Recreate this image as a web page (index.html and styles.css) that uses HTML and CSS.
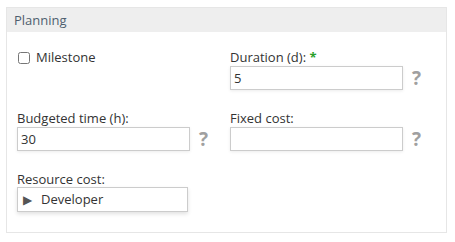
FILE: index.html
```html
<!DOCTYPE html>
<html lang="en">
<head>
<meta charset="UTF-8">
<link rel="stylesheet" href="styles.css">
<title>Planning</title>
</head>
<body>
    <div class="panel">
        <div class="panel-header">Planning</div>
        <div class="panel-body">
            <div class="field">
                <label class="check"><input type="checkbox"> Milestone</label>
            </div>
            <div class="field">
                <div class="label">Duration (d): <span class="req">*</span></div>
                <div class="row">
                    <input class="text" type="text" value="5">
                    <span class="help">?</span>
                </div>
            </div>
            <div class="field">
                <div class="label">Budgeted time (h):</div>
                <div class="row">
                    <input class="text" type="text" value="30">
                    <span class="help">?</span>
                </div>
            </div>
            <div class="field">
                <div class="label">Fixed cost:</div>
                <div class="row">
                    <input class="text" type="text" value="">
                    <span class="help">?</span>
                </div>
            </div>
            <div class="field">
                <div class="label">Resource cost:</div>
                <div class="tree"><span class="arrow">&#9654;</span>Developer</div>
            </div>
        </div>
    </div>
</body>
</html>
```

FILE: styles.css
```css
html, body {
    margin: 0;
    background-color: #fff;
    font-family: "Open Sans", "DejaVu Sans", sans-serif;
    font-size: 13px;
    color: #333;
}
.panel {
    width: 439px;
    margin: 7px 0 0 6px;
    border: 1px solid #e6e6e6;
}
.panel-header {
    height: 24px;
    line-height: 24px;
    padding-left: 7px;
    background-color: #eeeeee;
    color: #4e5e6e;
}
.panel-body {
    display: grid;
    grid-template-columns: 213px 213px;
    row-gap: 20px;
    padding: 16px 0 21px 10px;
}
.field {
    height: 41px;
}
.label {
    height: 15px;
    padding-top: 2px;
    line-height: 15px;
}
.req {
    color: #2aa02a;
    font-weight: bold;
}
.check {
    display: flex;
    align-items: center;
    gap: 6px;
    padding-top: 2px;
    line-height: 15px;
    margin-left: 1px;
}
.check input {
    margin: 0;
    width: 12px;
    height: 12px;
}
.row {
    display: flex;
    align-items: center;
}
.text {
    box-sizing: border-box;
    width: 173px;
    height: 24px;
    margin: 0;
    padding: 0 3px;
    border: 1px solid #cccccc;
    font-family: "Open Sans", "DejaVu Sans", sans-serif;
    font-size: 13px;
    color: #333;
    box-shadow: 0 1px 3px rgba(0, 0, 0, 0.08);
}
.help {
    margin-left: 9px;
    font-weight: bold;
    font-size: 19px;
    color: #a0a0a0;
}
.tree {
    box-sizing: border-box;
    width: 171px;
    height: 25px;
    line-height: 23px;
    padding-left: 5px;
    border: 1px solid #cccccc;
    box-shadow: 0 2px 4px rgba(0, 0, 0, 0.12);
}
.arrow {
    display: inline-block;
    width: 18px;
    font-size: 12px;
    color: #555;
    vertical-align: top;
}
```
